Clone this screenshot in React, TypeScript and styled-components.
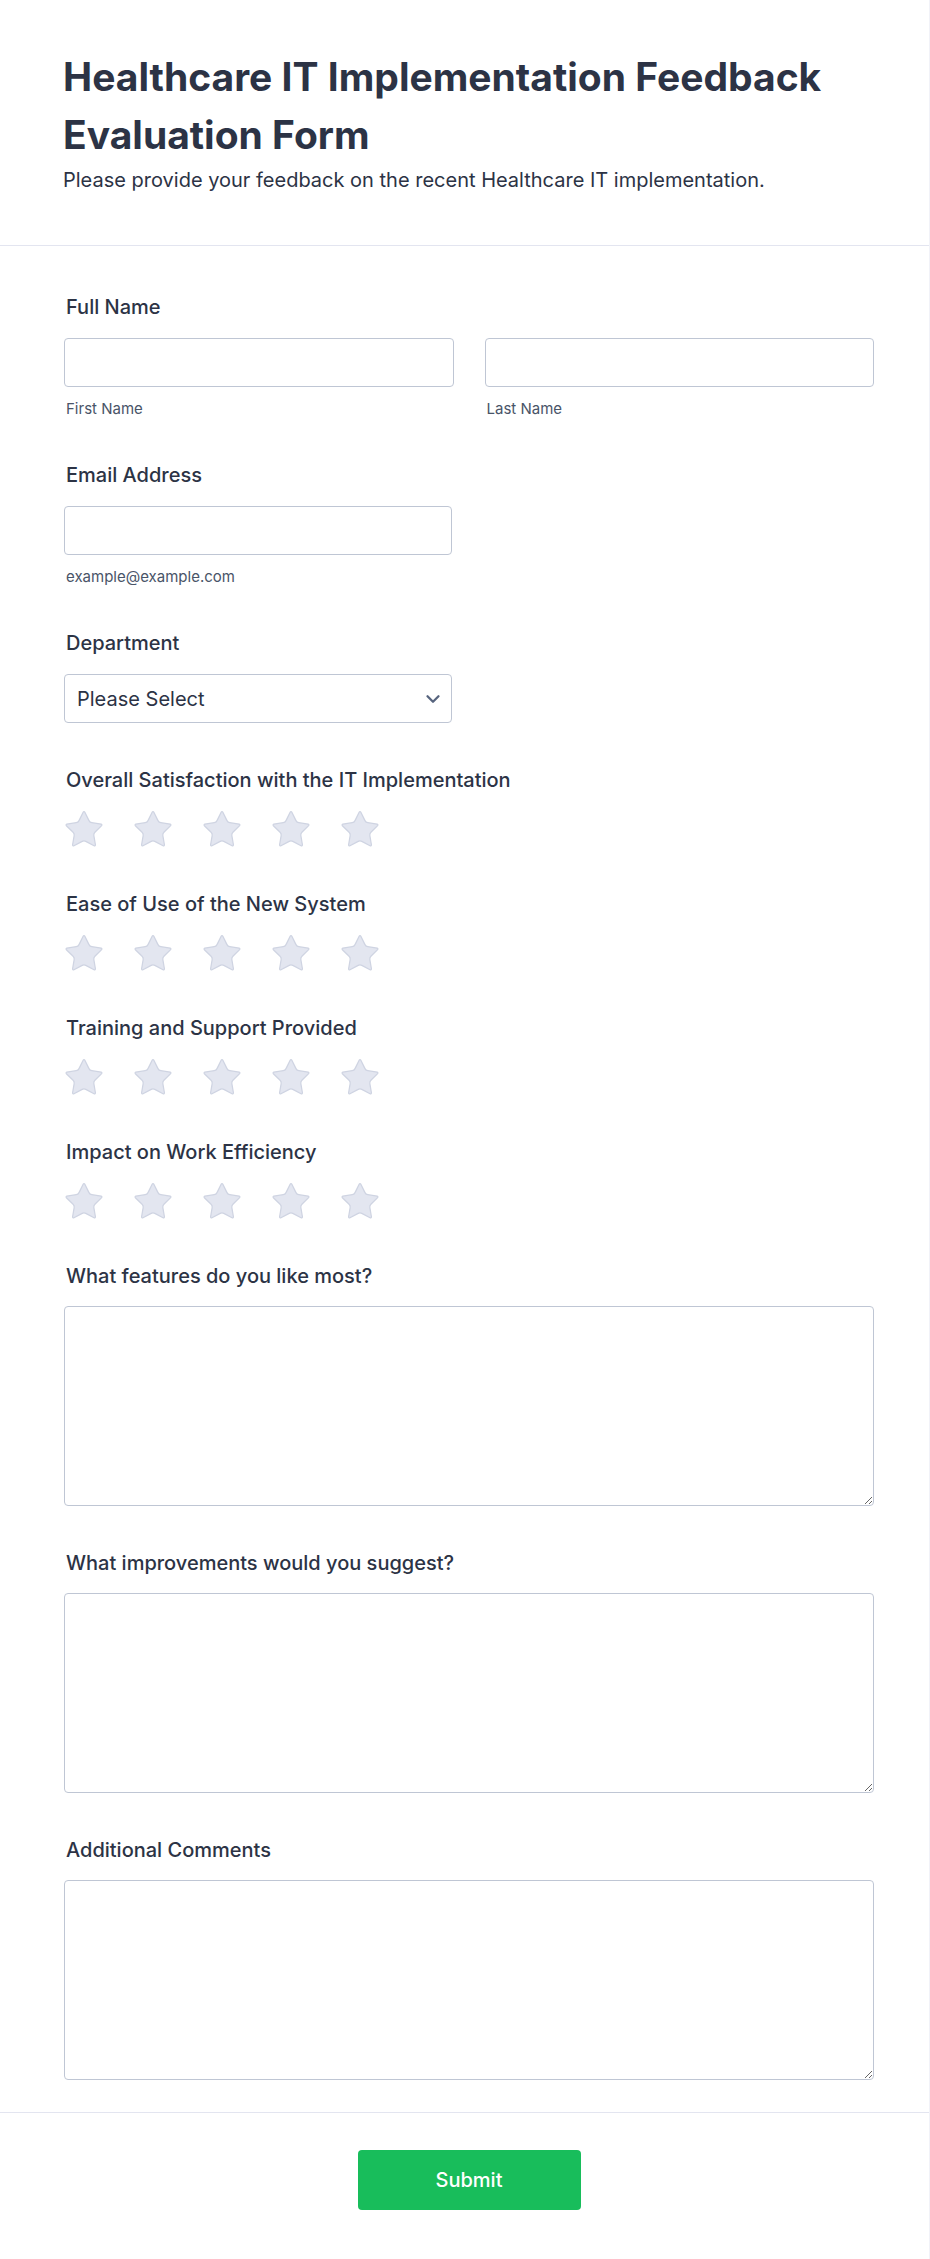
import React from "react";
import styled, { createGlobalStyle } from "styled-components";
import { ChevronDown } from "lucide-react";

const GlobalStyle = createGlobalStyle`
  html, body {
    margin: 0;
    padding: 0;
    background: #ffffff;
  }
  body {
    font-family: Inter, "Noto Sans", "Liberation Sans", sans-serif;
    color: #2c3345;
  }
  * { box-sizing: border-box; }
`;

const Page = styled.div`
  width: 930px;
  min-height: 2259px;
  background: #ffffff;
  border-right: 1px solid #f1f2f8;
`;

const Header = styled.header`
  padding: 48px 55px 51px 63px;
  border-bottom: 1px solid #e3e5f0;
`;

const Title = styled.h1`
  margin: 0;
  font-size: 39px;
  line-height: 58px;
  font-weight: 700;
  color: #2c3345;
`;

const Subtitle = styled.p`
  margin: 3px 0 0;
  font-size: 20px;
  line-height: 27px;
  font-weight: 400;
  color: #2c3345;
`;

const FormBody = styled.div`
  padding: 48px 55px 32px 64px;
  display: flex;
  flex-direction: column;
  gap: 44px;
`;

const Field = styled.div`
  display: flex;
  flex-direction: column;
`;

const Label = styled.label<{ $mb?: number }>`
  display: block;
  font-size: 20px;
  line-height: 27px;
  font-weight: 500;
  color: #2c3345;
  padding-left: 2px;
  margin-bottom: ${(p) => p.$mb ?? 17}px;
`;

const Row = styled.div`
  display: grid;
  grid-template-columns: 1fr 1fr;
  column-gap: 31px;
`;

const Half = styled.div<{ $width?: number }>`
  display: flex;
  flex-direction: column;
  width: ${(p) => (p.$width ? `${p.$width}px` : "auto")};
`;

const TextInput = styled.input`
  width: 100%;
  height: 49px;
  border: 1px solid #bfc6d4;
  border-radius: 4px;
  padding: 0 12px;
  font-family: inherit;
  font-size: 18px;
  color: #2c3345;
  background: #fff;
  outline: none;
`;

const SubLabel = styled.span`
  display: block;
  margin-top: 13px;
  padding-left: 2px;
  font-size: 15px;
  line-height: 18px;
  color: #495468;
`;

const SelectWrap = styled.div`
  position: relative;
  width: 388px;
`;

const Select = styled.select`
  width: 100%;
  height: 49px;
  appearance: none;
  -webkit-appearance: none;
  border: 1px solid #bfc6d4;
  border-radius: 4px;
  padding: 0 40px 0 12px;
  font-family: inherit;
  font-size: 20px;
  color: #2c3345;
  background: #fff;
  outline: none;
`;

const Chevron = styled.span`
  position: absolute;
  right: 8px;
  top: 50%;
  transform: translateY(-50%);
  display: flex;
  color: #57647e;
  pointer-events: none;
`;

const Stars = styled.div`
  display: flex;
  gap: 31px;
  padding-left: 1px;
`;

const StarSvg = styled.svg`
  width: 38px;
  height: 36px;
  display: block;
`;

const TextArea = styled.textarea`
  width: 100%;
  height: 200px;
  border: 1px solid #bfc6d4;
  border-radius: 4px;
  padding: 10px 12px;
  font-family: inherit;
  font-size: 18px;
  color: #2c3345;
  background: #fff;
  outline: none;
  resize: vertical;
  display: block;
`;

const Footer = styled.div`
  border-top: 1px solid #e3e5f0;
  padding: 37px 55px 49px 64px;
  display: flex;
  justify-content: center;
`;

const SubmitButton = styled.button`
  width: 223px;
  height: 60px;
  border: none;
  border-radius: 4px;
  background: #18bd5b;
  color: #ffffff;
  font-family: inherit;
  font-size: 20px;
  font-weight: 500;
  cursor: pointer;
`;

const Star = () => (
  <StarSvg viewBox="1.4 1.6 21.2 20.1" aria-hidden="true">
    <path
      d="M11.525 2.295a.53.53 0 0 1 .95 0l2.31 4.679a2.123 2.123 0 0 0 1.595 1.16l5.166.756a.53.53 0 0 1 .294.904l-3.736 3.638a2.123 2.123 0 0 0-.611 1.878l.882 5.14a.53.53 0 0 1-.771.56l-4.618-2.428a2.122 2.122 0 0 0-1.973 0L6.396 21.01a.53.53 0 0 1-.77-.56l.881-5.139a2.122 2.122 0 0 0-.611-1.879L2.16 9.795a.53.53 0 0 1 .294-.906l5.165-.755a2.122 2.122 0 0 0 1.597-1.16z"
      fill="#e3e6f0"
      stroke="#cfd4e2"
      strokeWidth="0.7"
      strokeLinejoin="round"
    />
  </StarSvg>
);

const ratings = [
  "Overall Satisfaction with the IT Implementation",
  "Ease of Use of the New System",
  "Training and Support Provided",
  "Impact on Work Efficiency",
];

const longAnswers = [
  "What features do you like most?",
  "What improvements would you suggest?",
  "Additional Comments",
];

export default function App() {
  return (
    <>
      <GlobalStyle />
      <Page>
        <Header>
          <Title>Healthcare IT Implementation Feedback Evaluation Form</Title>
          <Subtitle>
            Please provide your feedback on the recent Healthcare IT implementation.
          </Subtitle>
        </Header>
        <FormBody>
          <Field>
            <Label>Full Name</Label>
            <Row>
              <Half>
                <TextInput type="text" />
                <SubLabel>First Name</SubLabel>
              </Half>
              <Half>
                <TextInput type="text" />
                <SubLabel>Last Name</SubLabel>
              </Half>
            </Row>
          </Field>
          <Field>
            <Label>Email Address</Label>
            <Half $width={388}>
              <TextInput type="email" />
              <SubLabel>example@example.com</SubLabel>
            </Half>
          </Field>
          <Field>
            <Label>Department</Label>
            <SelectWrap>
              <Select defaultValue="">
                <option value="">Please Select</option>
                <option>IT</option>
                <option>Nursing</option>
                <option>Administration</option>
              </Select>
              <Chevron>
                <ChevronDown size={22} strokeWidth={2.5} />
              </Chevron>
            </SelectWrap>
          </Field>
          {ratings.map((r) => (
            <Field key={r}>
              <Label>{r}</Label>
              <Stars>
                {[0, 1, 2, 3, 4].map((i) => (
                  <Star key={i} />
                ))}
              </Stars>
            </Field>
          ))}
          {longAnswers.map((q) => (
            <Field key={q}>
              <Label $mb={16}>{q}</Label>
              <TextArea />
            </Field>
          ))}
        </FormBody>
        <Footer>
          <SubmitButton type="button">Submit</SubmitButton>
        </Footer>
      </Page>
    </>
  );
}
